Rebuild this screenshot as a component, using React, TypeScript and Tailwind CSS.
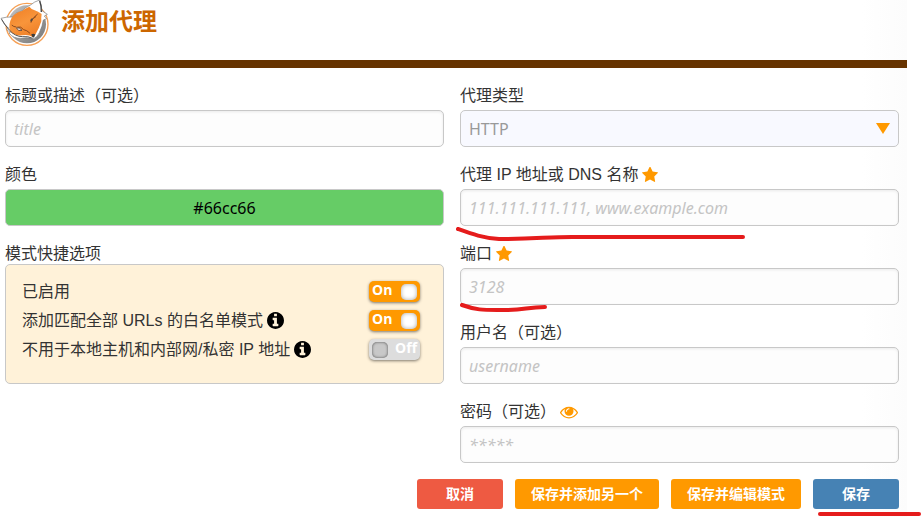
import { useState, type ReactNode } from 'react';

const inputClass =
  'h-[37px] w-full rounded-[5px] border border-[#c8c8c8] bg-[#fdfdfd] px-2 font-["Noto_Sans","Noto_Sans_CJK_SC",sans-serif] text-base text-black shadow-[inset_0_1px_3px_rgba(0,0,0,0.08)] placeholder:text-[#c4c4c4] placeholder:italic';

const FoxLogo = () => (
  <svg viewBox="0 0 150 141" className="h-[47px] w-[50px]" aria-hidden="true">
    <defs>
      <linearGradient id="disc" x1="0" y1="0" x2="1" y2="1">
        <stop offset="0" stopColor="#c4c4c4" />
        <stop offset="0.5" stopColor="#9c9c9c" />
        <stop offset="1" stopColor="#787878" />
      </linearGradient>
      <linearGradient id="fur" x1="0" y1="0" x2="0.5" y2="1">
        <stop offset="0" stopColor="#ef7d22" />
        <stop offset="0.6" stopColor="#f8953b" />
        <stop offset="1" stopColor="#f0822a" />
      </linearGradient>
    </defs>
    <circle cx="81" cy="73" r="63" fill="#fff" stroke="#f6a055" strokeWidth="4" />
    <circle cx="81" cy="73" r="57" fill="url(#disc)" />
    {/* white ears and cheeks */}
    <path
      d="M3 55Q20 50 36 51Q48 36 66 33Q72 24 90 16Q104 4 119 0Q124 14 126 32L142 43L133 48L140 56L130 60Q128 78 118 98Q112 113 99 117Q82 111 66 115Q40 117 27 99L31 97L20 89L25 84Q10 72 3 55Z"
      fill="#fff"
      stroke="#777"
      strokeWidth="2"
      strokeLinejoin="round"
    />
    <path
      d="M35 53Q48 36 66 33Q74 26 88 20Q93 27 104 31Q114 34 125 42Q123 54 124 64Q118 84 105 106L98 111Q84 102 67 106Q42 109 29 92Q25 72 35 53Z"
      fill="url(#fur)"
    />
    <path d="M119 3Q125 18 124 36" fill="none" stroke="#444" strokeWidth="4" />
    <path d="M5 58Q15 76 28 90Q45 110 68 110Q84 108 98 115" fill="none" stroke="#555" strokeWidth="3" />
    <path
      d="M53 81Q63 78 71 89Q80 90 89 99M93 67Q94 56 107 50M48 81Q41 81 36 76M101 53L112 43"
      fill="none"
      stroke="#8d4a1c"
      strokeWidth="3"
      strokeLinecap="round"
    />
    <path d="M49 84Q58 80 66 91Q55 95 49 84Z" fill="#f2eeee" stroke="#6b4d3a" strokeWidth="3" />
    <path d="M91 65Q90 56 98 55Q101 62 91 65Z" fill="#504a45" />
    <path d="M94 103Q99 100 106 103Q104 112 99 113Q95 110 94 103Z" fill="#3c3c3c" />
  </svg>
);

const EyeIcon = () => (
  <svg viewBox="0 0 1792 1792" className="size-[18px] fill-current" aria-hidden="true">
    <path d="M1664 960q-152-236-381-353 61 104 61 225 0 185-131.5 316.5t-316.5 131.5-316.5-131.5-131.5-316.5q0-121 61-225-229 117-381 353 133 205 333.5 326.5t434.5 121.5 434.5-121.5 333.5-326.5zm-720-384q0-20-14-34t-34-14q-125 0-214.5 89.5t-89.5 214.5q0 20 14 34t34 14 34-14 14-34q0-86 61-147t147-61q20 0 34-14t14-34zm848 384q0 34-20 69-140 230-376.5 368.5t-499.5 138.5-499.5-139-376.5-368q-20-35-20-69t20-69q140-229 376.5-368t499.5-139 499.5 139 376.5 368q20 35 20 69z" />
  </svg>
);

const InfoIcon = () => (
  <svg viewBox="128 128 1536 1536" className="size-[17px] fill-black" aria-hidden="true">
    <path d="M1152 1376v-160q0-14-9-23t-23-9h-96v-512q0-14-9-23t-23-9h-320q-14 0-23 9t-9 23v160q0 14 9 23t23 9h96v320h-96q-14 0-23 9t-9 23v160q0 14 9 23t23 9h448q14 0 23-9t9-23zm-128-896v-160q0-14-9-23t-23-9h-192q-14 0-23 9t-9 23v160q0 14 9 23t23 9h192q14 0 23-9t9-23zm640 416q0 209-103 385.5t-279.5 279.5-385.5 103-385.5-103-279.5-279.5-103-385.5 103-385.5 279.5-279.5 385.5-103 385.5 103 279.5 279.5 103 385.5z" />
  </svg>
);

const StarIcon = () => (
  <svg viewBox="64 64 1664 1664" className="size-4 fill-[#ff9900]" aria-hidden="true">
    <path d="M1728 647q0 22-26 48l-363 354 86 500q1 7 1 20 0 21-10.5 35.5t-30.5 14.5q-19 0-40-12l-449-236-449 236q-22 12-40 12-21 0-31.5-14.5t-10.5-35.5q0-6 2-20l86-500-364-354q-25-27-25-48 0-37 56-46l502-73 225-455q19-41 49-41t49 41l225 455 502 73q56 9 56 46z" />
  </svg>
);

interface FieldProps {
  id: string;
  label: string;
  icon?: ReactNode;
  children: ReactNode;
}

const Field = ({ id, label, icon, children }: FieldProps) => (
  <div className="relative">
    <div className="mb-1 flex h-[21px] items-center gap-1">
      <label htmlFor={id}>{label}</label>
      {icon}
    </div>
    {children}
  </div>
);

interface SwitchRowProps {
  id: string;
  label: string;
  info?: boolean;
  initial: boolean;
}

const SwitchRow = ({ id, label, info, initial }: SwitchRowProps) => {
  const [on, setOn] = useState(initial);

  return (
    <div className="flex h-[29px] items-center justify-between">
      <div className="flex items-center gap-1">
        <label htmlFor={id}>{label}</label>
        {info && <InfoIcon />}
      </div>
      <label
        className={`flex h-[21px] w-[51px] items-center justify-between rounded-[5px] px-[3px] font-["Open_Sans",sans-serif] text-sm leading-4 font-bold text-white shadow-[0_1px_3px_rgba(0,0,0,0.5)] ${
          on ? 'bg-[#ff9900]' : 'flex-row-reverse bg-[#dddddd]'
        }`}
      >
        <input
          id={id}
          type="checkbox"
          className="sr-only"
          checked={on}
          onChange={e => setOn(e.target.checked)}
        />
        <span className="pb-1">{on ? 'On' : 'Off'}</span>
        <span
          className={`size-4 rounded-[5px] ${
            on
              ? 'bg-white shadow-[inset_0_0_4px_rgba(0,0,0,0.35)]'
              : 'bg-[#c8c8c8] shadow-[inset_0_0_3px_rgba(0,0,0,0.6)]'
          }`}
        />
      </label>
    </div>
  );
};

const buttonClass = 'h-[30px] rounded-[3px] text-sm font-bold text-white';

const App = () => {
  const [color, setColor] = useState('#66cc66');
  const [showPassword, setShowPassword] = useState(false);

  return (
    <div className="min-h-screen bg-white pr-[15px] font-['Liberation_Sans','Noto_Sans_CJK_SC',sans-serif] text-base leading-[21px] text-[#333]">
      <div className="min-h-screen bg-linear-to-r from-white from-95% to-[#fcfcfc]">
        <header className="flex h-[68px] items-start gap-[11px] border-b-8 border-[#663300]">
          <FoxLogo />
          <h1 className="pt-1 text-2xl leading-9 font-bold text-[#cc6600]">添加代理</h1>
        </header>

        <form className="pt-[17px] pr-2 pb-2 pl-[5px]" onSubmit={e => e.preventDefault()}>
          <div className="grid grid-cols-2 gap-4">
            <div className="flex flex-col gap-[17px]">
              <Field id="title" label="标题或描述（可选）">
                <input id="title" type="text" placeholder="title" className={inputClass} />
              </Field>
              <Field id="color" label="颜色">
                <input
                  id="color"
                  type="text"
                  value={color}
                  onChange={e => setColor(e.target.value)}
                  className="h-[37px] w-full rounded-[5px] border border-[#c8c8c8] bg-[#66cc66] text-center font-['Noto_Sans',sans-serif] text-base text-black"
                />
              </Field>
              <section aria-labelledby="patterns">
                <h2 id="patterns">模式快捷选项</h2>
                <div className="rounded-[5px] border border-[#c8c8c8] bg-[#fff2d9] pt-3 pr-[23px] pb-[19px] pl-4">
                  <SwitchRow id="enabled" label="已启用" initial={true} />
                  <SwitchRow
                    id="whitelist"
                    label="添加匹配全部 URLs 的白名单模式"
                    info
                    initial={true}
                  />
                  <SwitchRow
                    id="internal"
                    label="不用于本地主机和内部网/私密 IP 地址"
                    info
                    initial={false}
                  />
                </div>
              </section>
            </div>

            <div className="flex flex-col gap-[17px]">
              <Field id="type" label="代理类型">
                <div className="relative">
                  <select
                    id="type"
                    className="h-[37px] w-full appearance-none rounded-[5px] border border-[#c8c8c8] bg-[#f8f9ff] px-2 font-['Noto_Sans',sans-serif] text-base text-[#999]"
                  >
                    <option>HTTP</option>
                  </select>
                  <svg
                    viewBox="0 0 14 11"
                    className="pointer-events-none absolute top-[13px] right-[9px] h-[11px] w-[14px] fill-[#ff9900]"
                    aria-hidden="true"
                  >
                    <path d="M0 0H14L7 11Z" />
                  </svg>
                </div>
              </Field>
              <Field id="address" label="代理 IP 地址或 DNS 名称" icon={<StarIcon />}>
                <input
                  id="address"
                  type="text"
                  placeholder="111.111.111.111, www.example.com"
                  className={inputClass}
                />
                <svg
                  viewBox="0 0 292 14"
                  className="pointer-events-none absolute top-[63px] -left-1 h-[14px] w-[292px]"
                  aria-hidden="true"
                >
                  <path
                    d="M2 2C16 7 27 11 43 12C78 12 92 10 116 10H287"
                    fill="none"
                    stroke="#e51c1c"
                    strokeWidth="4"
                    strokeLinecap="round"
                  />
                </svg>
              </Field>
              <Field id="port" label="端口" icon={<StarIcon />}>
                <input id="port" type="text" placeholder="3128" className={inputClass} />
                <svg
                  viewBox="0 0 90 10"
                  className="pointer-events-none absolute top-[60px] left-0 h-[10px] w-[90px]"
                  aria-hidden="true"
                >
                  <path
                    d="M2 2C16 7 23 7 37 7C64 8 65 4 85 4"
                    fill="none"
                    stroke="#e51c1c"
                    strokeWidth="4"
                    strokeLinecap="round"
                  />
                </svg>
              </Field>
              <Field id="username" label="用户名（可选）">
                <input id="username" type="text" placeholder="username" className={inputClass} />
              </Field>
              <Field
                id="password"
                label="密码（可选）"
                icon={
                  <button
                    type="button"
                    aria-label="显示密码"
                    className="text-[#ff9900]"
                    onClick={() => setShowPassword(!showPassword)}
                  >
                    <EyeIcon />
                  </button>
                }
              >
                <input
                  id="password"
                  type={showPassword ? 'text' : 'password'}
                  placeholder="*****"
                  className={inputClass}
                />
              </Field>
            </div>
          </div>

          <div className="mt-4 flex justify-end gap-3">
            <button type="button" className={`${buttonClass} w-[86px] bg-[#ee5a42]`}>
              取消
            </button>
            <button type="submit" className={`${buttonClass} w-36 bg-[#ff9900]`}>
              保存并添加另一个
            </button>
            <button type="submit" className={`${buttonClass} w-[130px] bg-[#ff9900]`}>
              保存并编辑模式
            </button>
            <div className="relative">
              <button type="submit" className={`${buttonClass} w-[86px] bg-[#4682b4]`}>
                保存
              </button>
              <svg
                viewBox="0 0 104 6"
                className="pointer-events-none absolute top-8 left-1 h-[6px] w-[104px]"
                aria-hidden="true"
              >
                <path
                  d="M3 3H102"
                  fill="none"
                  stroke="#e51c1c"
                  strokeWidth="4"
                  strokeLinecap="round"
                />
              </svg>
            </div>
          </div>
        </form>
      </div>
    </div>
  );
};

export default App;
